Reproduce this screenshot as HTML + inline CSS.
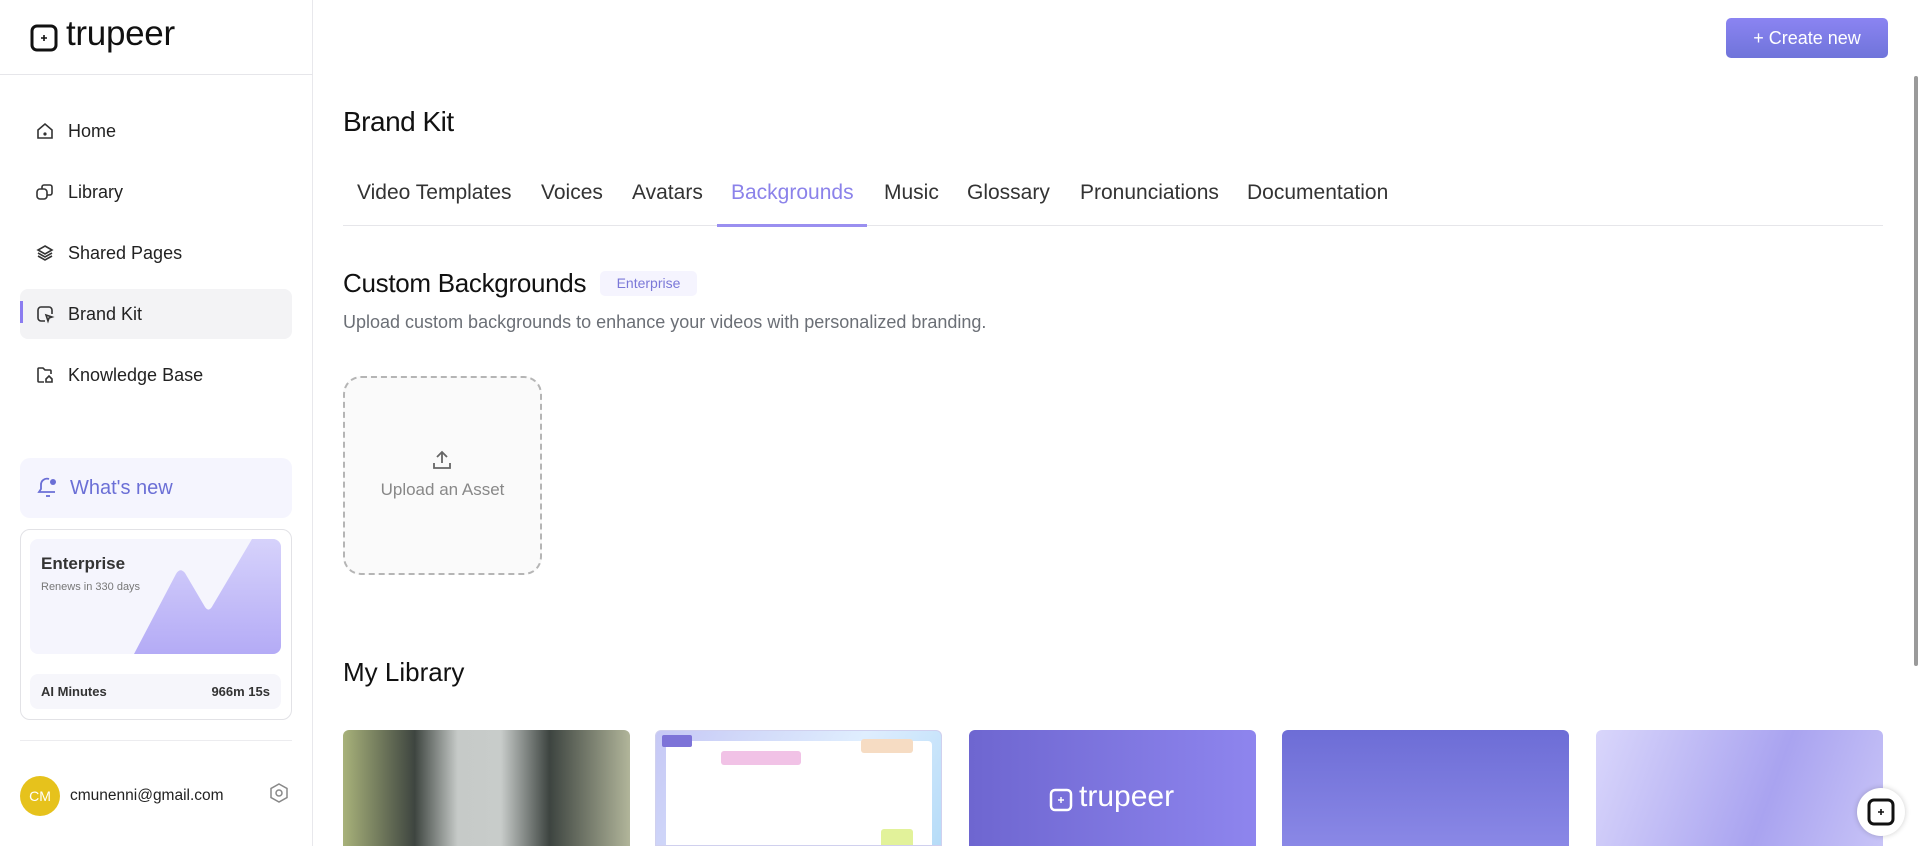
<!DOCTYPE html>
<html><head><meta charset="utf-8"><style>
*{box-sizing:border-box;margin:0;padding:0}
body{width:1920px;height:846px;overflow:hidden;background:#fff;font-family:"Liberation Sans",sans-serif;color:#1f1f23;position:relative}
.a{position:absolute}
.side{left:0;top:0;width:313px;height:846px;border-right:1px solid #e8e8ec;background:#fff}
.nav{left:20px;width:272px;height:50px;display:flex;align-items:center;padding-left:48px;font-size:18px;color:#222}
.nav svg{position:absolute;left:15px;top:15px}
.tab{top:181px;font-size:21px;color:#333}
.card{top:730px;width:287px;height:116px;border-radius:6px 6px 0 0;overflow:hidden}
</style></head><body>
<div class="a side">
 <svg class="a" style="left:30px;top:24px" width="28" height="28" viewBox="0 0 28 28"><rect x="2" y="2" width="24" height="24" rx="5" fill="none" stroke="#111" stroke-width="3"/><path d="M14 11v6M11 14h6" stroke="#111" stroke-width="1.6"/></svg>
 <div class="a" style="left:66px;top:14px;font-size:35px;letter-spacing:-0.3px;color:#111">trupeer</div>
 <div class="a" style="left:0;top:74px;width:313px;height:1px;background:#e6e6ea"></div>
 <div class="a nav" style="top:106px"><svg width="20" height="20" viewBox="0 0 20 20" fill="none" stroke="#333" stroke-width="1.6"><path d="M3 9l7-6 7 6v8H3z"/><circle cx="10" cy="13" r=".8" fill="#333"/></svg>Home</div>
 <div class="a nav" style="top:167px"><svg width="20" height="20" viewBox="0 0 20 20" fill="none" stroke="#333" stroke-width="1.6"><rect x="2" y="7" width="10" height="10" rx="3"/><path d="M7 7V5a2 2 0 012-2h6a2 2 0 012 2v6a2 2 0 01-2 2h-3"/></svg>Library</div>
 <div class="a nav" style="top:228px"><svg width="20" height="20" viewBox="0 0 20 20" fill="none" stroke="#333" stroke-width="1.6"><path d="M10 3l7 4-7 4-7-4z M3 10l7 4 7-4 M3 13l7 4 7-4"/></svg>Shared Pages</div>
 <div class="a nav" style="top:289px;background:#f3f3f5;border-radius:8px"><div class="a" style="left:0;top:12px;width:3px;height:22px;background:#8b7cf0"></div><svg width="20" height="20" viewBox="0 0 20 20" fill="none" stroke="#333" stroke-width="1.6"><path d="M17 10V6a3 3 0 00-3-3H6a3 3 0 00-3 3v8a3 3 0 003 3h4"/><path d="M11 11l6 2-3 1-1 3z"/></svg>Brand Kit</div>
 <div class="a nav" style="top:350px"><svg width="20" height="20" viewBox="0 0 20 20" fill="none" stroke="#333" stroke-width="1.6"><path d="M9 17H4a1 1 0 01-1-1V4a1 1 0 011-1h4l2 2h5a1 1 0 011 1v3"/><path d="M11 17h6v-3l-3-3-3 3z"/></svg>Knowledge Base</div>
 <div class="a" style="left:20px;top:458px;width:272px;height:60px;background:#f5f5fe;border-radius:10px"></div>
 <svg class="a" style="left:36px;top:475px" width="24" height="24" viewBox="0 0 24 24" fill="none" stroke="#6b6fd6" stroke-width="1.8"><path d="M13 4a6 6 0 00-8 6v4l-2 3h16"/><path d="M10 21h4"/><circle cx="17" cy="7" r="3" fill="#6b6fd6" stroke="none"/></svg>
 <div class="a" style="left:70px;top:477px;font-size:20px;color:#6b6fd6">What's new</div>
 <div class="a" style="left:20px;top:529px;width:272px;height:191px;border:1px solid #e2e2e6;border-radius:10px"></div>
 <div class="a" style="left:30px;top:539px;width:251px;height:115px;background:#f5f5fd;border-radius:8px;overflow:hidden">
  <svg class="a" style="left:0;top:0" width="251" height="115" viewBox="0 0 251 115"><defs><linearGradient id="g" x1="0" y1="0" x2="0" y2="1"><stop offset="0" stop-color="#d6d2fb"/><stop offset="1" stop-color="#b4abf6"/></linearGradient></defs><path d="M104 115L146 35Q150 28 155 34L175 68Q179 74 183 66L222 0H251V115Z" fill="url(#g)"/></svg>
  <div class="a" style="left:11px;top:15px;font-size:17px;font-weight:bold;color:#333">Enterprise</div>
  <div class="a" style="left:11px;top:42px;font-size:11px;color:#777">Renews in 330 days</div>
 </div>
 <div class="a" style="left:30px;top:674px;width:251px;height:35px;background:#f6f6fb;border-radius:8px;font-size:13px;font-weight:bold;color:#333">
  <span class="a" style="left:11px;top:10px">AI Minutes</span><span class="a" style="right:11px;top:10px">966m 15s</span></div>
 <div class="a" style="left:20px;top:740px;width:272px;height:1px;background:#ececef"></div>
 <div class="a" style="left:20px;top:776px;width:40px;height:40px;border-radius:50%;background:#e6c21c;color:#fff;font-size:14px;text-align:center;line-height:40px">CM</div>
 <div class="a" style="left:70px;top:787px;font-size:15.5px;color:#222">cmunenni@gmail.com</div>
 <svg class="a" style="left:268px;top:782px" width="22" height="22" viewBox="0 0 22 22" fill="none" stroke="#888" stroke-width="1.5"><path d="M11 2l8 4.5v9L11 20l-8-4.5v-9z"/><circle cx="11" cy="11" r="3"/></svg>
</div>
<div class="a" style="left:1726px;top:18px;width:162px;height:40px;border-radius:5px;background:linear-gradient(#8b84f2,#6f74da);color:#fff;font-size:18px;text-align:center;line-height:40px">+ Create new</div>
<div class="a" style="left:1914px;top:76px;width:4px;height:590px;background:#9a9a9a;border-radius:2px"></div>
<div class="a" style="left:343px;top:106px;font-size:28px;color:#111;letter-spacing:-0.5px">Brand Kit</div>
<div class="a tab" style="left:357px">Video Templates</div>
<div class="a tab" style="left:541px">Voices</div>
<div class="a tab" style="left:632px">Avatars</div>
<div class="a tab" style="left:731px;color:#8b82ea">Backgrounds</div>
<div class="a tab" style="left:884px">Music</div>
<div class="a tab" style="left:967px">Glossary</div>
<div class="a tab" style="left:1080px">Pronunciations</div>
<div class="a tab" style="left:1247px">Documentation</div>
<div class="a" style="left:343px;top:225px;width:1540px;height:1px;background:#e6e6ea"></div>
<div class="a" style="left:717px;top:224px;width:150px;height:3px;background:#9a8ff0"></div>
<div class="a" style="left:343px;top:268px;font-size:26px;color:#111;letter-spacing:-0.3px">Custom Backgrounds</div>
<div class="a" style="left:600px;top:271px;width:97px;height:25px;background:#f5f4fe;border-radius:5px;color:#7b78d8;font-size:14px;text-align:center;line-height:25px">Enterprise</div>
<div class="a" style="left:343px;top:312px;font-size:18px;color:#6b6f76">Upload custom backgrounds to enhance your videos with personalized branding.</div>
<div class="a" style="left:343px;top:376px;width:199px;height:199px;border:2px dashed #b5b5b5;border-radius:18px;background:#fafafa"></div>
<svg class="a" style="left:430px;top:448px" width="24" height="24" viewBox="0 0 24 24" fill="none" stroke="#666" stroke-width="1.8"><path d="M12 15V4M7 9l5-5 5 5M4 15v5h16v-5"/></svg>
<div class="a" style="left:343px;top:480px;width:199px;text-align:center;font-size:17px;color:#888">Upload an Asset</div>
<div class="a" style="left:343px;top:657px;font-size:26px;color:#111">My Library</div>
<div class="a card" style="left:343px;background:linear-gradient(90deg,#a8b27a,#3e4540 25%,#c6cac8 40%,#c8ccca 55%,#3d4440 72%,#b1b59a)"></div>
<div class="a card" style="left:655px;background:linear-gradient(120deg,#c6c8f5,#dfeefe 60%,#b6dcf8);border:1px solid #d0d0ee">
 <div class="a" style="left:10px;top:10px;width:266px;height:110px;background:#fff;border-radius:4px"></div>
 <div class="a" style="left:6px;top:4px;width:30px;height:12px;background:#7d73d8;border-radius:2px"></div>
 <div class="a" style="left:65px;top:20px;width:80px;height:14px;background:#f1c2e6;border-radius:3px"></div>
 <div class="a" style="left:205px;top:8px;width:52px;height:14px;background:#f6dcc3;border-radius:3px"></div>
 <div class="a" style="left:225px;top:98px;width:32px;height:20px;background:#e2f29a;border-radius:3px"></div>
</div>
<div class="a card" style="left:969px;background:linear-gradient(90deg,#6e66d0,#8e85ee);color:#fff;font-size:30px;padding:0">
 <svg class="a" style="left:80px;top:58px" width="24" height="24" viewBox="0 0 24 24"><rect x="2" y="2" width="20" height="20" rx="4" fill="none" stroke="#fff" stroke-width="2.5"/><path d="M12 9v6M9 12h6" stroke="#fff" stroke-width="1.4"/></svg>
 <span class="a" style="left:110px;top:50px">trupeer</span></div>
<div class="a card" style="left:1282px;background:linear-gradient(180deg,#6d6dd6,#8a88e6)"></div>
<div class="a card" style="left:1596px;background:linear-gradient(110deg,#d9d6fb,#a9a3f0 60%,#c8c4f7)"></div>
<div class="a" style="left:1857px;top:788px;width:48px;height:48px;border-radius:50%;background:#fff;box-shadow:0 0 6px rgba(0,0,0,.2)"></div>
<svg class="a" style="left:1867px;top:798px" width="28" height="28" viewBox="0 0 28 28"><rect x="2" y="2" width="24" height="24" rx="5" fill="none" stroke="#111" stroke-width="3"/><path d="M14 11v6M11 14h6" stroke="#111" stroke-width="1.6"/></svg>
</body></html>
